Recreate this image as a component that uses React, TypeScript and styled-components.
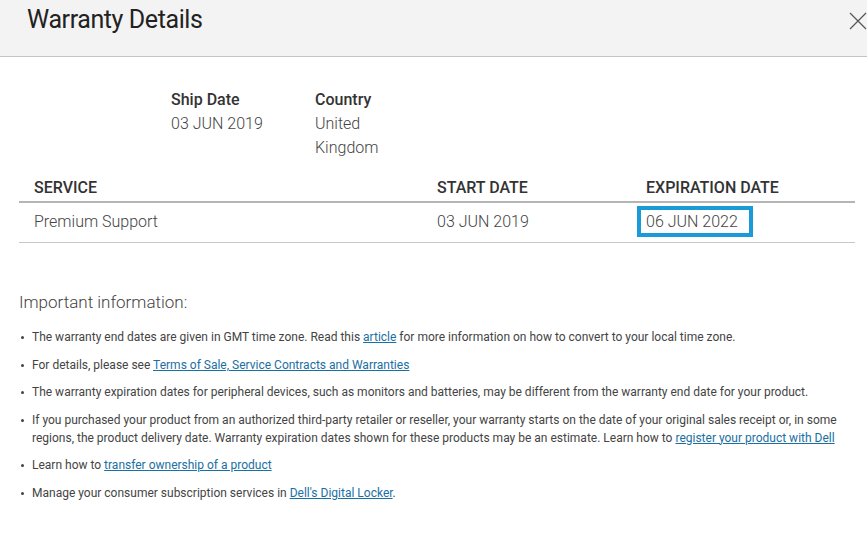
import React from "react";
import styled, { createGlobalStyle } from "styled-components";

const GlobalStyle = createGlobalStyle`
  html, body {
    margin: 0;
    padding: 0;
    background: #fff;
    font-family: Roboto, "Liberation Sans", Arial, sans-serif;
    color: #444;
  }
`;

const Dialog = styled.div`
  width: 867px;
  height: 545px;
  overflow: hidden;
  background: #fff;
`;

const Header = styled.header`
  height: 57px;
  background: #f3f3f3;
  border-bottom: 1px solid #c4c4c4;
  display: flex;
  align-items: flex-start;
  justify-content: space-between;
  padding: 5px 0 0 27px;
  box-sizing: border-box;
`;

const Title = styled.h1`
  margin: 0;
  font-size: 25px;
  line-height: 30px;
  font-weight: 400;
  color: #222;
  letter-spacing: -0.4px;
`;

const CloseButton = styled.button`
  border: 0;
  background: none;
  padding: 0;
  margin: 7px 0 0 0;
  width: 18px;
  height: 18px;
  cursor: pointer;
  display: flex;
`;

const Body = styled.div`
  padding: 31px 12px 0 19px;
`;

const Summary = styled.div`
  display: flex;
  gap: 52px;
  padding-left: 152px;
`;

const SummaryItem = styled.div<{ $width: number }>`
  width: ${(p) => p.$width}px;
  font-size: 16px;
  line-height: 24px;
`;

const SummaryLabel = styled.div`
  font-weight: 500;
  color: #333;
`;

const SummaryValue = styled.div`
  font-weight: 300;
  color: #444;
`;

const Table = styled.div`
  margin-top: 16px;
  width: 836px;
`;

const Row = styled.div<{ $head?: boolean }>`
  display: grid;
  grid-template-columns: 403px 209px 224px;
  border-bottom: ${(p) => (p.$head ? "2px solid #b5b5b5" : "1px solid #c8c8c8")};
  height: ${(p) => (p.$head ? "25px" : "39px")};
  align-items: ${(p) => (p.$head ? "start" : "center")};
`;

const Cell = styled.div<{ $head?: boolean }>`
  padding-left: 15px;
  font-size: 16px;
  line-height: 24px;
  font-weight: ${(p) => (p.$head ? 500 : 300)};
  color: ${(p) => (p.$head ? "#333" : "#444")};
  margin-top: ${(p) => (p.$head ? 0 : "-2px")};
`;

const Highlight = styled.span`
  display: inline-block;
  margin-left: -9px;
  border: 4px solid #1b9ad8;
  padding: 0 11px 0 5px;
  line-height: 23px;
`;

const InfoTitle = styled.h2`
  margin: 47px 0 0;
  font-size: 17px;
  line-height: 24px;
  font-weight: 300;
  color: #444;
`;

const InfoList = styled.ul`
  list-style: none;
  margin: 14px 0 0;
  padding: 0;
`;

const InfoItem = styled.li`
  position: relative;
  padding-left: 13px;
  font-size: 12px;
  line-height: 18px;
  margin-bottom: 9.5px;
  color: #444;

  &::before {
    content: "";
    position: absolute;
    left: 2px;
    top: 8px;
    width: 3px;
    height: 3px;
    border-radius: 50%;
    background: #444;
  }
`;

const Link = styled.a`
  color: #1a6fa3;
  text-decoration: underline;
`;

const CloseIcon = () => (
  <svg width="18" height="18" viewBox="0 0 18 18" fill="none" stroke="#555" strokeWidth="1.2">
    <path d="M1 1 L17 17 M17 1 L1 17" />
  </svg>
);

export default function App() {
  return (
    <>
      <GlobalStyle />
      <Dialog>
        <Header>
          <Title>Warranty Details</Title>
          <CloseButton aria-label="Close">
            <CloseIcon />
          </CloseButton>
        </Header>
        <Body>
          <Summary>
            <SummaryItem $width={92}>
              <SummaryLabel>Ship Date</SummaryLabel>
              <SummaryValue>03 JUN 2019</SummaryValue>
            </SummaryItem>
            <SummaryItem $width={70}>
              <SummaryLabel>Country</SummaryLabel>
              <SummaryValue>United Kingdom</SummaryValue>
            </SummaryItem>
          </Summary>

          <Table>
            <Row $head>
              <Cell $head>SERVICE</Cell>
              <Cell $head>START DATE</Cell>
              <Cell $head>EXPIRATION DATE</Cell>
            </Row>
            <Row>
              <Cell>Premium Support</Cell>
              <Cell>03 JUN 2019</Cell>
              <Cell>
                <Highlight>06 JUN 2022</Highlight>
              </Cell>
            </Row>
          </Table>

          <InfoTitle>Important information:</InfoTitle>
          <InfoList>
            <InfoItem>
              The warranty end dates are given in GMT time zone. Read this <Link href="#">article</Link> for more
              information on how to convert to your local time zone.
            </InfoItem>
            <InfoItem>
              For details, please see <Link href="#">Terms of Sale, Service Contracts and Warranties</Link>
            </InfoItem>
            <InfoItem>
              The warranty expiration dates for peripheral devices, such as monitors and batteries, may be different from
              the warranty end date for your product.
            </InfoItem>
            <InfoItem>
              If you purchased your product from an authorized third-party retailer or reseller, your warranty starts on
              the date of your original sales receipt or, in some regions, the product delivery date. Warranty expiration
              dates shown for these products may be an estimate. Learn how to{" "}
              <Link href="#">register your product with Dell</Link>
            </InfoItem>
            <InfoItem>
              Learn how to <Link href="#">transfer ownership of a product</Link>
            </InfoItem>
            <InfoItem>
              Manage your consumer subscription services in <Link href="#">Dell's Digital Locker</Link>.
            </InfoItem>
          </InfoList>
        </Body>
      </Dialog>
    </>
  );
}
